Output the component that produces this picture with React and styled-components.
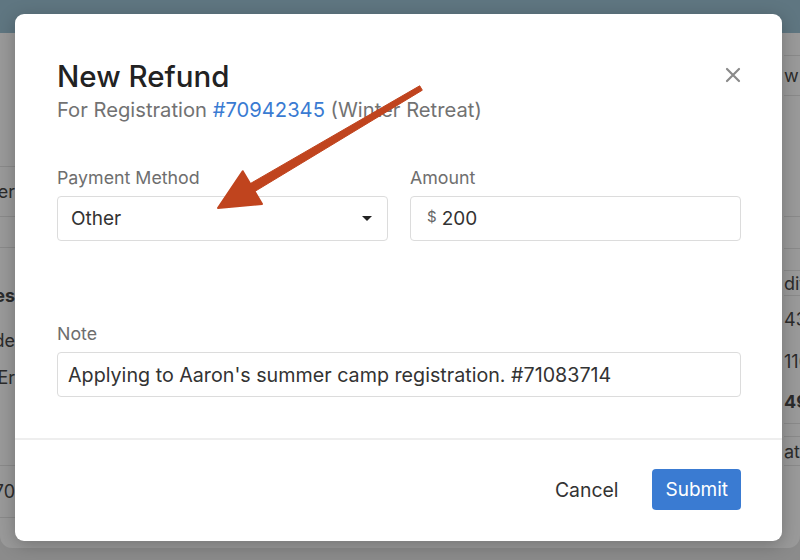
import styled, { createGlobalStyle } from 'styled-components';

const GlobalStyle = createGlobalStyle`
  html, body {
    margin: 0;
    padding: 0;
  }
  body {
    font-family: Inter, "Liberation Sans", Arial, sans-serif;
    -webkit-font-smoothing: antialiased;
  }
`;

const Page = styled.div`
  position: relative;
  width: 800px;
  height: 560px;
  overflow: hidden;
  background: #8b8b8b;
`;

const Backdrop = styled.div`
  height: 548px;
  background: #9a9a9a;
  border-radius: 0 0 12px 12px;
  display: flex;
  flex-direction: column;
  overflow: hidden;
`;

const TopBar = styled.div`
  height: 33px;
  flex-shrink: 0;
  background: #5f7681;
`;

const BackContent = styled.div`
  flex: 1;
  display: flex;
  justify-content: space-between;
`;

const Strip = styled.div`
  width: ${(p) => p.$width}px;
  display: flex;
  flex-direction: column;
  align-items: ${(p) => (p.$side === 'left' ? 'flex-end' : 'flex-start')};
`;

const StripRow = styled.div`
  height: ${(p) => p.$h}px;
  width: 100%;
  flex-shrink: 0;
  display: flex;
  align-items: center;
  justify-content: ${(p) => (p.$side === 'left' ? 'flex-end' : 'flex-start')};
  border-top: 1px solid ${(p) => (p.$line ? '#8a8a8a' : 'transparent')};
  box-sizing: border-box;
  font-size: 18px;
  font-weight: ${(p) => (p.$bold ? 700 : 400)};
  color: #2b2b2b;
  white-space: nowrap;
`;

const Modal = styled.div`
  position: absolute;
  left: 15px;
  top: 14px;
  width: 767px;
  height: 527px;
  background: #fff;
  border-radius: 9px;
  box-shadow: 0 4px 18px rgba(0, 0, 0, 0.25);
  display: flex;
  flex-direction: column;
  box-sizing: border-box;
`;

const Header = styled.div`
  position: relative;
  padding: 44px 42px 0;
`;

const Title = styled.h2`
  margin: 0;
  font-size: 29.5px;
  line-height: 36px;
  font-weight: 500;
  color: #222;
`;

const Subtitle = styled.div`
  margin-top: 4px;
  font-size: 20.2px;
  line-height: 24px;
  color: #727272;

  a {
    color: #3a7bd2;
    text-decoration: none;
  }
`;

const CloseButton = styled.button`
  position: absolute;
  top: 52px;
  right: 40px;
  width: 18px;
  height: 18px;
  padding: 0;
  border: none;
  background: none;
  display: flex;
  align-items: center;
  justify-content: center;
  cursor: pointer;
`;

const Body = styled.div`
  flex: 1;
  padding: 45px 41px 0 42px;
`;

const FieldRow = styled.div`
  display: grid;
  grid-template-columns: 331px 331px;
  column-gap: 22px;
`;

const Field = styled.div`
  display: flex;
  flex-direction: column;
  margin-top: ${(p) => p.$top || 0}px;
`;

const Label = styled.label`
  font-size: 17.8px;
  line-height: 22px;
  color: #6e6e6e;
  margin-bottom: 7px;
`;

const Box = styled.div`
  height: 45px;
  box-sizing: border-box;
  border: 1px solid #dcdcdc;
  border-radius: 4px;
  display: flex;
  align-items: center;
  padding: 0 ${(p) => p.$padRight || 12}px 0 ${(p) => p.$padLeft || 12}px;
  font-size: ${(p) => p.$size || 19}px;
  color: #333;
  white-space: nowrap;
`;

const Value = styled.span`
  flex: 1;
`;

const Caret = styled.span`
  width: 0;
  height: 0;
  border-left: 5px solid transparent;
  border-right: 5px solid transparent;
  border-top: 5px solid #222;
`;

const Currency = styled.span`
  font-size: 15px;
  color: #666;
  margin-right: 5px;
  position: relative;
  top: -2px;
`;

const Footer = styled.div`
  border-top: 2px solid #eeeeee;
  padding: 29px 41px 31px;
  display: flex;
  justify-content: flex-end;
  align-items: center;
  gap: 34px;
`;

const CancelButton = styled.button`
  border: none;
  background: none;
  padding: 0;
  font-family: inherit;
  font-size: 19.4px;
  color: #333;
  cursor: pointer;
`;

const SubmitButton = styled.button`
  height: 41px;
  padding: 0 13px;
  border: none;
  border-radius: 4px;
  background: #3a7bd2;
  color: #fff;
  font-family: inherit;
  font-size: 19px;
  cursor: pointer;
`;

const Annotation = styled.svg`
  position: absolute;
  left: 0;
  top: 0;
  pointer-events: none;
`;

const leftRows = [
  { h: 133 },
  { h: 50, line: true, text: 'er' },
  { h: 31, line: true },
  { h: 22, line: true },
  { h: 52, text: 'es', bold: true },
  { h: 37, text: 'de' },
  { h: 37, text: 'Er' },
  { h: 70 },
  { h: 52, line: true, text: '70' },
  { h: 30, line: true },
];

const rightRows = [
  { h: 22 },
  { h: 40, line: true, text: 'w c' },
  { h: 121, line: true },
  { h: 32, line: true },
  { h: 22, line: true },
  { h: 25, line: true, text: 'dit' },
  { h: 47, line: true, text: '439' },
  { h: 37, text: '116' },
  { h: 44, text: '49', bold: true },
  { h: 13, line: true },
  { h: 29, line: true, text: 'atic' },
  { h: 40, line: true },
];

const App = () => {
  return (
    <>
      <GlobalStyle />
      <Page>
        <Backdrop>
          <TopBar />
          <BackContent>
            <Strip $width={15} $side="left">
              {leftRows.map((r, i) => (
                <StripRow key={i} $h={r.h} $line={r.line} $bold={r.bold} $side="left">
                  {r.text}
                </StripRow>
              ))}
            </Strip>
            <Strip $width={16} $side="right">
              {rightRows.map((r, i) => (
                <StripRow key={i} $h={r.h} $line={r.line} $bold={r.bold} $side="right">
                  {r.text}
                </StripRow>
              ))}
            </Strip>
          </BackContent>
        </Backdrop>

        <Modal>
          <Header>
            <Title>New Refund</Title>
            <Subtitle>
              For Registration <a href="#">#70942345</a> (Winter Retreat)
            </Subtitle>
            <CloseButton aria-label="Close">
              <svg width="16" height="16" viewBox="0 0 16 16">
                <path d="M2 2 L14 14 M14 2 L2 14" stroke="#8a8a8a" strokeWidth="2.2" strokeLinecap="round" />
              </svg>
            </CloseButton>
          </Header>

          <Body>
            <FieldRow>
              <Field>
                <Label>Payment Method</Label>
                <Box $padLeft={13} $padRight={15}>
                  <Value>Other</Value>
                  <Caret />
                </Box>
              </Field>
              <Field>
                <Label>Amount</Label>
                <Box $padLeft={16}>
                  <Currency>$</Currency>
                  <Value>200</Value>
                </Box>
              </Field>
            </FieldRow>
            <Field $top={82}>
              <Label>Note</Label>
              <Box $padLeft={10} $size={19.7}>
                <Value>Applying to Aaron's summer camp registration. #71083714</Value>
              </Box>
            </Field>
          </Body>

          <Footer>
            <CancelButton>Cancel</CancelButton>
            <SubmitButton>Submit</SubmitButton>
          </Footer>
        </Modal>

        <Annotation width="800" height="560" viewBox="0 0 800 560">
          <path
            d="M422.3 90.2 L254.7 191.5 L250.1 183.7 L419.7 85.8 Z"
            fill="#c0441e"
            stroke="#c0441e"
            strokeWidth="1"
            strokeLinejoin="round"
          />
          <path d="M218 208 L242.7 171.2 L262 204 Z" fill="#c0441e" stroke="#c0441e" strokeWidth="2" strokeLinejoin="round" />
        </Annotation>
      </Page>
    </>
  );
};

export default App;
